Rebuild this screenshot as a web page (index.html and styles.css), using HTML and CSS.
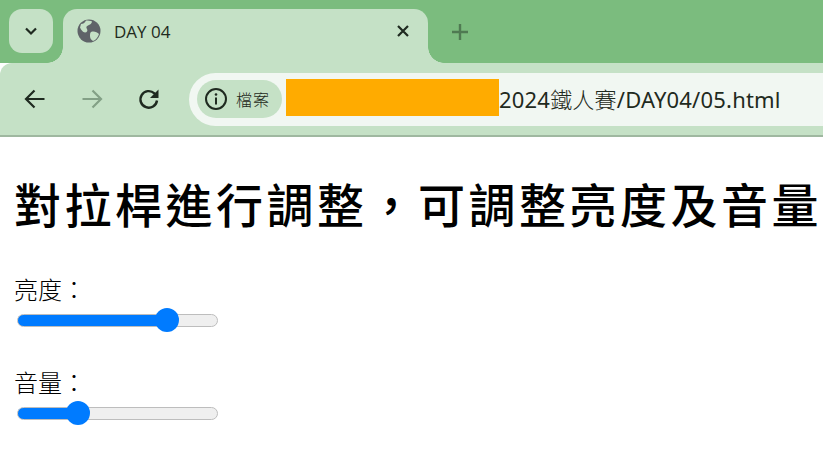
FILE: index.html
```html
<!DOCTYPE html>
<html lang="zh-Hant">
<head>
    <meta charset="UTF-8">
    <meta name="viewport" content="width=device-width, initial-scale=1.0">
    <title>DAY 04</title>
    <link rel="stylesheet" href="styles.css">
</head>
<body>
    <div class="tabstrip">
        <div class="tab-search">
            <svg width="16" height="16" viewBox="0 0 16 16"><path d="M3 5.500l5 5 5-5" fill="none" stroke="#1f2a20" stroke-width="2.200"/></svg>
        </div>
        <div class="tab">
            <svg class="favicon" width="24" height="24" viewBox="0 0 24 24">
                <circle cx="12" cy="12" r="11.500" fill="#5f6368"/>
                <path d="M4 5c2 0 4-1 5-3.500 2 0 5 0 6 1 0 2-2 3-4 4s-2 2-1 3.500 0 3.500-2 3.500-4-3-5-5zM14 13c3-1 6 0 8 2-1 3-3 6-6 7-2-1-3-3-3-5s0-3 1-4z" fill="#c5e1c6"/>
            </svg>
            <span class="tab-title">DAY 04</span>
            <svg class="tab-close" width="14" height="14" viewBox="0 0 14 14"><path d="M2 2l10 10M12 2L2 12" stroke="#1f2a20" stroke-width="2.200"/></svg>
        </div>
        <svg class="new-tab" width="18" height="18" viewBox="0 0 18 18"><path d="M9 1v16M1 9h16" stroke="#4f7a52" stroke-width="2.400"/></svg>
    </div>
    <div class="toolbar">
        <svg class="nav-btn" width="24" height="24" viewBox="0 0 24 24"><path d="M21.500 12H3.500M11.500 3.500L3 12l8.500 8.500" fill="none" stroke="#1f2a20" stroke-width="2.200"/></svg>
        <svg class="nav-btn" width="24" height="24" viewBox="0 0 24 24"><path d="M2.500 12h18M12.500 3.500L21 12l-8.500 8.500" fill="none" stroke="#83a086" stroke-width="2.200"/></svg>
        <svg class="nav-btn" width="24" height="24" viewBox="0 0 24 24"><path d="M20 13.500a8.300 8.300 0 1 1-2.600-7.200L20 9" fill="none" stroke="#1f2a20" stroke-width="2.400"/><path d="M21.500 2.500v8.500h-8.500z" fill="#1f2a20"/></svg>
        <div class="omnibox">
            <div class="chip">
                <svg width="24" height="24" viewBox="0 0 24 24">
                    <circle cx="12" cy="12" r="10" fill="none" stroke="#1f2a20" stroke-width="2"/>
                    <path d="M12 10.500v7" stroke="#1f2a20" stroke-width="2"/>
                    <circle cx="12" cy="7.500" r="1.300" fill="#1f2a20"/>
                </svg>
                <span>檔案</span>
            </div>
            <div class="redacted"></div>
            <span class="url">2024<span class="url-cjk">鐵人賽</span>/DAY04/05.html</span>
        </div>
    </div>
    <div class="main">
        <h1>對拉桿進行調整，可調整亮度及音量</h1>
        <label class="field">亮度：
            <input type="range" class="slider" min="0" max="100" value="78.500" step="0.500" style="--fill: 78%">
        </label>
        <label class="field">音量：
            <input type="range" class="slider" min="0" max="100" value="27.500" step="0.500" style="--fill: 27%">
        </label>
    </div>
</body>
</html>
```

FILE: styles.css
```css
/* Global styles */
body {
    margin: 0;
    height: 468px;
    overflow: hidden;
    background: #fff;
    color: #000;
    font-family: "Noto Sans", "Noto Sans CJK TC", sans-serif;
}

/* Tab strip */
.tabstrip {
    height: 63px;
    box-sizing: border-box;
    padding: 9px 0 0 9px;
    display: flex;
    align-items: flex-start;
    background: #7bbc7e;
}
.tab-search {
    position: relative;
    z-index: 1;
    width: 44px;
    height: 44px;
    display: flex;
    align-items: center;
    justify-content: center;
    border-radius: 13px;
    background: #c5e1c6;
}
.tab {
    position: relative;
    width: 365px;
    height: 54px;
    margin-left: 10px;
    box-sizing: border-box;
    padding: 0 18px 10px 14px;
    display: flex;
    align-items: center;
    border-radius: 14px 14px 0 0;
    background: #c5e1c6;
    color: #1f2a20;
}
/* concave corners where the tab meets the toolbar */
.tab::before,
.tab::after {
    content: '';
    position: absolute;
    bottom: 0;
    width: 16px;
    height: 16px;
}
.tab::before {
    left: -16px;
    background: radial-gradient(circle at 0 0, #7bbc7e 15.500px, #c5e1c6 16px);
}
.tab::after {
    right: -16px;
    background: radial-gradient(circle at 100% 0, #7bbc7e 15.500px, #c5e1c6 16px);
}
.tab-title {
    margin-left: 13px;
    flex: 1;
    font-family: "Open Sans", sans-serif;
    font-size: 17px;
}
.new-tab {
    margin: 14px 0 0 23px;
}

/* Toolbar */
.toolbar {
    height: 74px;
    box-sizing: border-box;
    padding-left: 23px;
    display: flex;
    align-items: center;
    border-radius: 12px 0 0 0;
    background: #c5e1c6;
    border-bottom: 2px solid #9fb8a0;
}
.nav-btn {
    margin-right: 33px;
    flex-shrink: 0;
}
.toolbar .nav-btn:nth-child(3) {
    margin-right: 28px;
}
.omnibox {
    flex: 1;
    height: 53px;
    box-sizing: border-box;
    padding-left: 8px;
    display: flex;
    align-items: center;
    border-radius: 27px 0 0 27px;
    background: #f1f7f2;
}
.chip {
    width: 85px;
    height: 38px;
    box-sizing: border-box;
    padding-left: 7px;
    display: flex;
    align-items: center;
    gap: 8px;
    border-radius: 19px;
    background: #c5e1c6;
    font-size: 16px;
    font-weight: 300;
    letter-spacing: 1px;
    color: #1f2a20;
}
.redacted {
    width: 213px;
    height: 37px;
    margin: 0 0 3px 4px;
    background: #ffab00;
}
.url {
    margin-bottom: 3px;
    font-size: 22px;
    letter-spacing: 0.200px;
    color: #1f2a20;
}
.url-cjk {
    font-weight: 300;
}

/* Page content */
.main {
    padding: 0 0 0 14px;
}
.main h1 {
    margin: 37px 0 0;
    font-size: 47px;
    font-weight: 500;
    line-height: 62px;
    letter-spacing: 3.500px;
    white-space: nowrap;
}
.field {
    display: block;
    font-size: 24px;
    font-weight: 300;
    line-height: 32px;
    margin-top: 38px;
}
.field + .field {
    margin-top: 35px;
}
.slider {
    display: block;
    width: 201px;
    height: 24px;
    margin: 2px 0 0 3px;
    -webkit-appearance: none;
    appearance: none;
    background: transparent;
}
.slider::-webkit-slider-runnable-track {
    height: 13px;
    box-sizing: border-box;
    border: 1px solid #bdbdbd;
    border-radius: 7px;
    background: linear-gradient(to right, #007bff var(--fill), #efefef var(--fill));
}
.slider::-webkit-slider-thumb {
    -webkit-appearance: none;
    width: 24px;
    height: 24px;
    margin-top: -6.500px;
    border-radius: 50%;
    background: #007bff;
}
```
